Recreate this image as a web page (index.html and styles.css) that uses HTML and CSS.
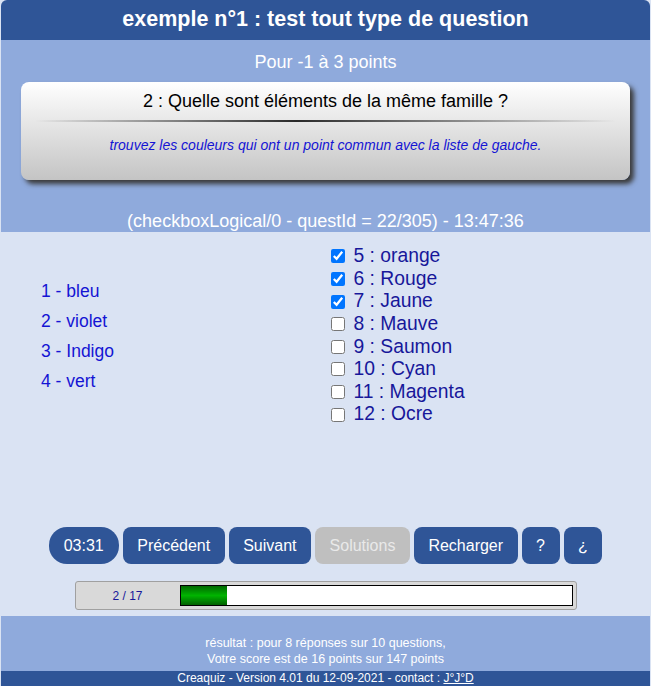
FILE: index.html
```html
<!DOCTYPE html>
<html lang="fr">
<head>
<meta charset="utf-8">
<title>Creaquiz</title>
<link rel="stylesheet" href="styles.css">
</head>
<body>
<div class="page">
  <header class="head">exemple n°1 : test tout type de question</header>
  <section class="band">
    <div class="points">Pour -1 à 3 points</div>
    <div class="card">
      <div class="question">2 : Quelle sont éléments de la même famille ?</div>
      <div class="rule"></div>
      <div class="hint">trouvez les couleurs qui ont un point commun avec la liste de gauche.</div>
    </div>
    <div class="meta">(checkboxLogical/0 - questId = 22/305) - 13:47:36</div>
  </section>
  <main class="main">
    <div class="cols">
      <ul class="left">
        <li>1 - bleu</li>
        <li>2 - violet</li>
        <li>3 - Indigo</li>
        <li>4 - vert</li>
      </ul>
      <div class="right">
        <label class="opt"><input type="checkbox" checked> 5 : orange</label>
        <label class="opt"><input type="checkbox" checked> 6 : Rouge</label>
        <label class="opt"><input type="checkbox" checked> 7 : Jaune</label>
        <label class="opt"><input type="checkbox"> 8 : Mauve</label>
        <label class="opt"><input type="checkbox"> 9 : Saumon</label>
        <label class="opt"><input type="checkbox"> 10 : Cyan</label>
        <label class="opt"><input type="checkbox"> 11 : Magenta</label>
        <label class="opt"><input type="checkbox"> 12 : Ocre</label>
      </div>
    </div>
    <div class="buttons">
      <span class="btn pill">03:31</span>
      <span class="btn">Précédent</span>
      <span class="btn">Suivant</span>
      <span class="btn disabled">Solutions</span>
      <span class="btn">Recharger</span>
      <span class="btn">?</span>
      <span class="btn">¿</span>
    </div>
    <div class="progress">
      <div class="count">2 / 17</div>
      <div class="track"><div class="fill" style="width:11.8%"></div></div>
    </div>
  </main>
  <section class="result">
    <div>résultat : pour 8 réponses sur 10 questions,</div>
    <div>Votre score est de 16 points sur 147 points</div>
  </section>
  <footer class="foot">Creaquiz - Version 4.01 du 12-09-2021 - contact : <a href="#">J°J°D</a></footer>
</div>
</body>
</html>
```
FILE: styles.css
```css
* { box-sizing: border-box; }
html, body { margin: 0; padding: 0; }
body {
  background: #dae3f3;
  font-family: "Liberation Sans", Arial, sans-serif;
}
.page {
  margin: 0 1px;
}
.head {
  height: 40px;
  background: #2f5597;
  color: #fff;
  font-weight: bold;
  font-size: 21.5px;
  line-height: 38px;
  text-align: center;
  border-radius: 6px 6px 0 0;
}
.band {
  background: #8faadc;
  height: 192px;
  padding-top: 12px;
  display: flex;
  flex-direction: column;
}
.points {
  color: #fff;
  font-size: 18px;
  line-height: 21px;
  text-align: center;
}
.card {
  margin: 9px 20px 0 20px;
  height: 99px;
  border-radius: 8px;
  background: linear-gradient(#ffffff, #c4c4c4);
  box-shadow: 4px 4px 5px #3a3a3a;
  padding-top: 8px;
}
.question {
  text-align: center;
  font-size: 18px;
  line-height: 22px;
  color: #000;
}
.rule {
  margin: 8px 14px 0 14px;
  height: 2px;
  background: linear-gradient(to right, rgba(60,60,60,0), #2a2a2a 45%, rgba(60,60,60,0));
}
.hint {
  margin-top: 15px;
  text-align: center;
  font-size: 14px;
  line-height: 16px;
  font-style: italic;
  color: #1414d4;
}
.meta {
  margin-top: 31px;
  color: #fff;
  font-size: 18px;
  line-height: 21px;
  text-align: center;
}
.main {
  height: 384px;
  display: flex;
  flex-direction: column;
}
.cols {
  height: 207px;
  display: grid;
  grid-template-columns: 1fr 1fr;
  align-items: center;
}
.left {
  list-style: none;
  margin: 0;
  padding: 0 0 0 40px;
  color: #1414d4;
  font-size: 17.5px;
}
.left li {
  line-height: 30px;
}
.right {
  display: flex;
  flex-direction: column;
  padding-left: 2px;
}
.opt {
  color: #17179a;
  font-size: 19.3px;
  line-height: 22.6px;
  display: flex;
  align-items: center;
  gap: 4px;
}
.opt input {
  margin: 0 5px 0 3px;
  width: 14px;
  height: 14px;
}
.buttons {
  margin-top: 88px;
  display: flex;
  justify-content: center;
  gap: 4px;
}
.btn {
  height: 37px;
  line-height: 37px;
  padding: 0 14.5px;
  background: #2f5597;
  color: #fff;
  font-size: 16px;
  border-radius: 8px;
}
.btn.pill {
  border-radius: 18px;
  padding: 0 15px;
}
.btn.disabled {
  background: #bfbfbf;
  color: #e9e9e9;
}
.progress {
  margin: 17px auto 0 auto;
  width: 502px;
  height: 29px;
  background: #d9d9d9;
  border: 1px solid #a0a0a0;
  border-radius: 3px;
  display: flex;
  align-items: center;
}
.count {
  width: 104px;
  text-align: center;
  font-size: 12px;
  color: #17179a;
}
.track {
  width: 393px;
  height: 21px;
  background: #fff;
  border: 1px solid #000;
}
.fill {
  height: 100%;
  background: linear-gradient(#006800, #00b400 50%, #006000);
}
.result {
  background: #8faadc;
  height: 55px;
  padding-top: 19px;
  color: #fff;
  font-size: 12.5px;
  line-height: 16px;
  text-align: center;
}
.foot {
  background: #2f5597;
  height: 15px;
  color: #fff;
  font-size: 12px;
  line-height: 15px;
  text-align: center;
}
.foot a {
  color: #fff;
}
```
